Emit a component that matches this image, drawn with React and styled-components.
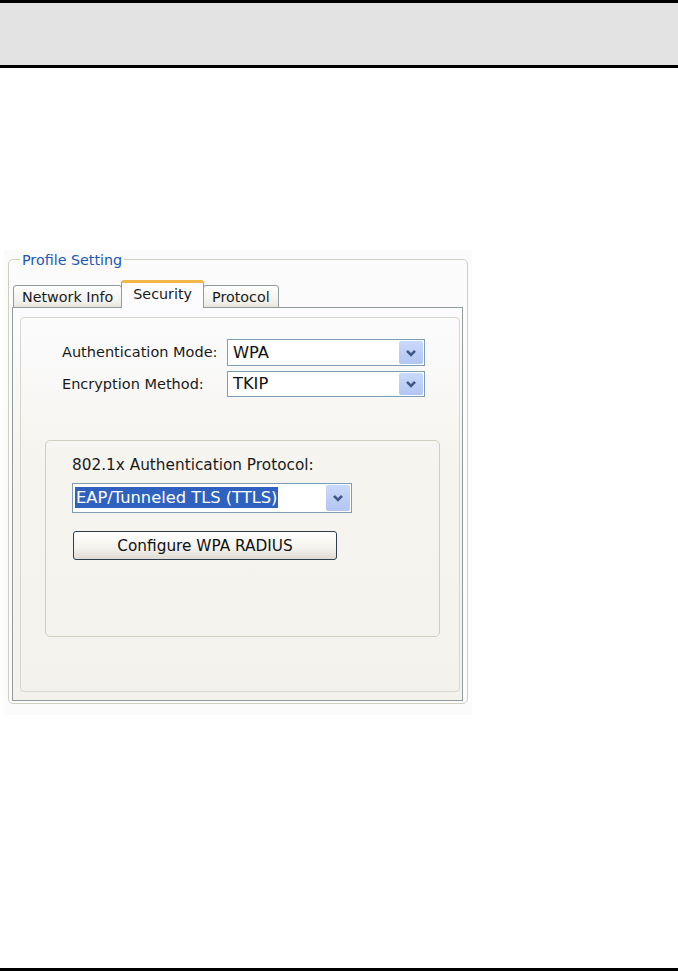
import styled, { createGlobalStyle } from "styled-components";

const GlobalStyle = createGlobalStyle`
  html, body {
    margin: 0;
    padding: 0;
    background: #ffffff;
  }
  * {
    box-sizing: border-box;
  }
`;

const Page = styled.div`
  width: 678px;
  height: 971px;
  display: flex;
  flex-direction: column;
  font-family: "DejaVu Sans", "Liberation Sans", sans-serif;
  font-size: 14.3px;
  color: #1a1a1a;
`;

const TopBand = styled.div`
  height: 68px;
  background: #e3e3e3;
  border-top: 3px solid #000;
  border-bottom: 3px solid #000;
`;

const BottomRule = styled.div`
  margin-top: auto;
  height: 3px;
  background: #000;
`;

const Shot = styled.div`
  width: 468px;
  margin: 182px 0 0 4px;
  padding: 0 0 11px 4px;
  background: #fbfbfb;
`;

const GroupBox = styled.fieldset`
  width: 460px;
  margin: 0;
  padding: 11px 4px 2px 3px;
  border: 1px solid #d0d0bf;
  border-radius: 5px;
`;

const Legend = styled.legend`
  margin-left: 8px;
  padding: 2px 2px 0;
  line-height: 17px;
  color: #1f56b8;
`;

const TabStrip = styled.div`
  display: flex;
  align-items: flex-end;
  padding-left: 1px;
  height: 28px;
  position: relative;
  z-index: 1;
  margin-bottom: -1px;
`;

const Tab = styled.div`
  height: ${(p) => (p.$active ? "28px" : "23px")};
  padding: 0 ${(p) => (p.$active ? "11px" : "8px")};
  margin: 0 ${(p) => (p.$active ? "-1px" : "0")};
  display: flex;
  align-items: center;
  padding-bottom: ${(p) => (p.$active ? "3px" : "0")};
  border: 1px solid #919b9c;
  border-bottom: ${(p) => (p.$active ? "none" : "1px solid #919b9c")};
  border-top: ${(p) => (p.$active ? "3px solid #f2b649" : "1px solid #919b9c")};
  border-radius: 3px 3px 0 0;
  background: ${(p) =>
    p.$active
      ? "#fcfcfe"
      : "linear-gradient(#ffffff, #f0efe9 80%, #e6e4dc)"};
  position: relative;
  z-index: ${(p) => (p.$active ? 2 : 1)};
  white-space: nowrap;
`;

const TabPane = styled.div`
  border: 1px solid #919b9c;
  background: linear-gradient(#fcfcfe, #f5f4ef 40%, #f4f2ec);
  padding: 9px 2px 8px 7px;
`;

const InnerFrame = styled.div`
  height: 375px;
  border: 1px solid #d8d6cc;
  border-radius: 4px;
  padding: 21px 0 0 24px;
`;

const FieldGrid = styled.div`
  display: grid;
  grid-template-columns: 165px 198px;
  row-gap: 5px;
  padding-left: 17px;
  align-items: center;
`;

const Label = styled.div`
  font-size: 14.5px;
  line-height: 17px;
  white-space: nowrap;
`;

const Combo = styled.div`
  width: ${(p) => p.$w}px;
  height: ${(p) => p.$h}px;
  border: 1px solid #7f9db9;
  background: #fff;
  display: flex;
  align-items: center;
  padding: 1px 1px 1px ${(p) => p.$pad}px;
`;

const ComboValue = styled.span`
  flex: 1;
  font-size: 16.3px;
  line-height: 20px;
  white-space: nowrap;
  color: #111;
`;

const Highlight = styled.span`
  background: #2f62c0;
  color: #fff;
  padding: 1px 1px;
  white-space: nowrap;
`;

const DropButton = styled.div`
  width: 24px;
  align-self: stretch;
  border-radius: 2px;
  background: linear-gradient(#cad9fb, #b2c6f3);
  display: flex;
  align-items: center;
  justify-content: center;
`;

const SubGroup = styled.div`
  width: 395px;
  height: 197px;
  margin-top: 43px;
  border: 1px solid #d0d0bf;
  border-radius: 5px;
  padding: 16px 0 0 26px;
  display: flex;
  flex-direction: column;
  align-items: flex-start;
  font-size: 15.3px;
`;

const SubLabel = styled.div`
  line-height: 17px;
  margin-bottom: 9px;
`;

const PushButton = styled.button`
  margin-top: 18px;
  margin-left: 1px;
  width: 264px;
  height: 29px;
  border: 1px solid #2f3d52;
  border-radius: 3px;
  background: linear-gradient(#ffffff, #f3f2ed 60%, #dedbd2);
  font: inherit;
  color: #111;
`;

function Chevron() {
  return (
    <svg width="12" height="8" viewBox="0 0 12 8">
      <polyline
        points="2,1.8 6,5.8 10,1.8"
        fill="none"
        stroke="#3e5688"
        strokeWidth="2.6"
      />
    </svg>
  );
}

function Select({ value, w, h, pad, selected }) {
  return (
    <Combo $w={w} $h={h} $pad={pad}>
      <ComboValue>{selected ? <Highlight>{value}</Highlight> : value}</ComboValue>
      <DropButton>
        <Chevron />
      </DropButton>
    </Combo>
  );
}

export default function App() {
  return (
    <>
      <GlobalStyle />
      <Page>
        <TopBand />
        <Shot>
          <GroupBox>
            <Legend>Profile Setting</Legend>
            <TabStrip>
              <Tab>Network Info</Tab>
              <Tab $active>Security</Tab>
              <Tab>Protocol</Tab>
            </TabStrip>
            <TabPane>
              <InnerFrame>
                <FieldGrid>
                  <Label>Authentication Mode:</Label>
                  <Select value="WPA" w={198} h={27} pad={5} />
                  <Label>Encryption Method:</Label>
                  <Select value="TKIP" w={198} h={26} pad={5} />
                </FieldGrid>
                <SubGroup>
                  <SubLabel>802.1x Authentication Protocol:</SubLabel>
                  <Select
                    value="EAP/Tunneled TLS (TTLS)"
                    w={280}
                    h={30}
                    pad={2}
                    selected
                  />
                  <PushButton>Configure WPA RADIUS</PushButton>
                </SubGroup>
              </InnerFrame>
            </TabPane>
          </GroupBox>
        </Shot>
        <BottomRule />
      </Page>
    </>
  );
}
